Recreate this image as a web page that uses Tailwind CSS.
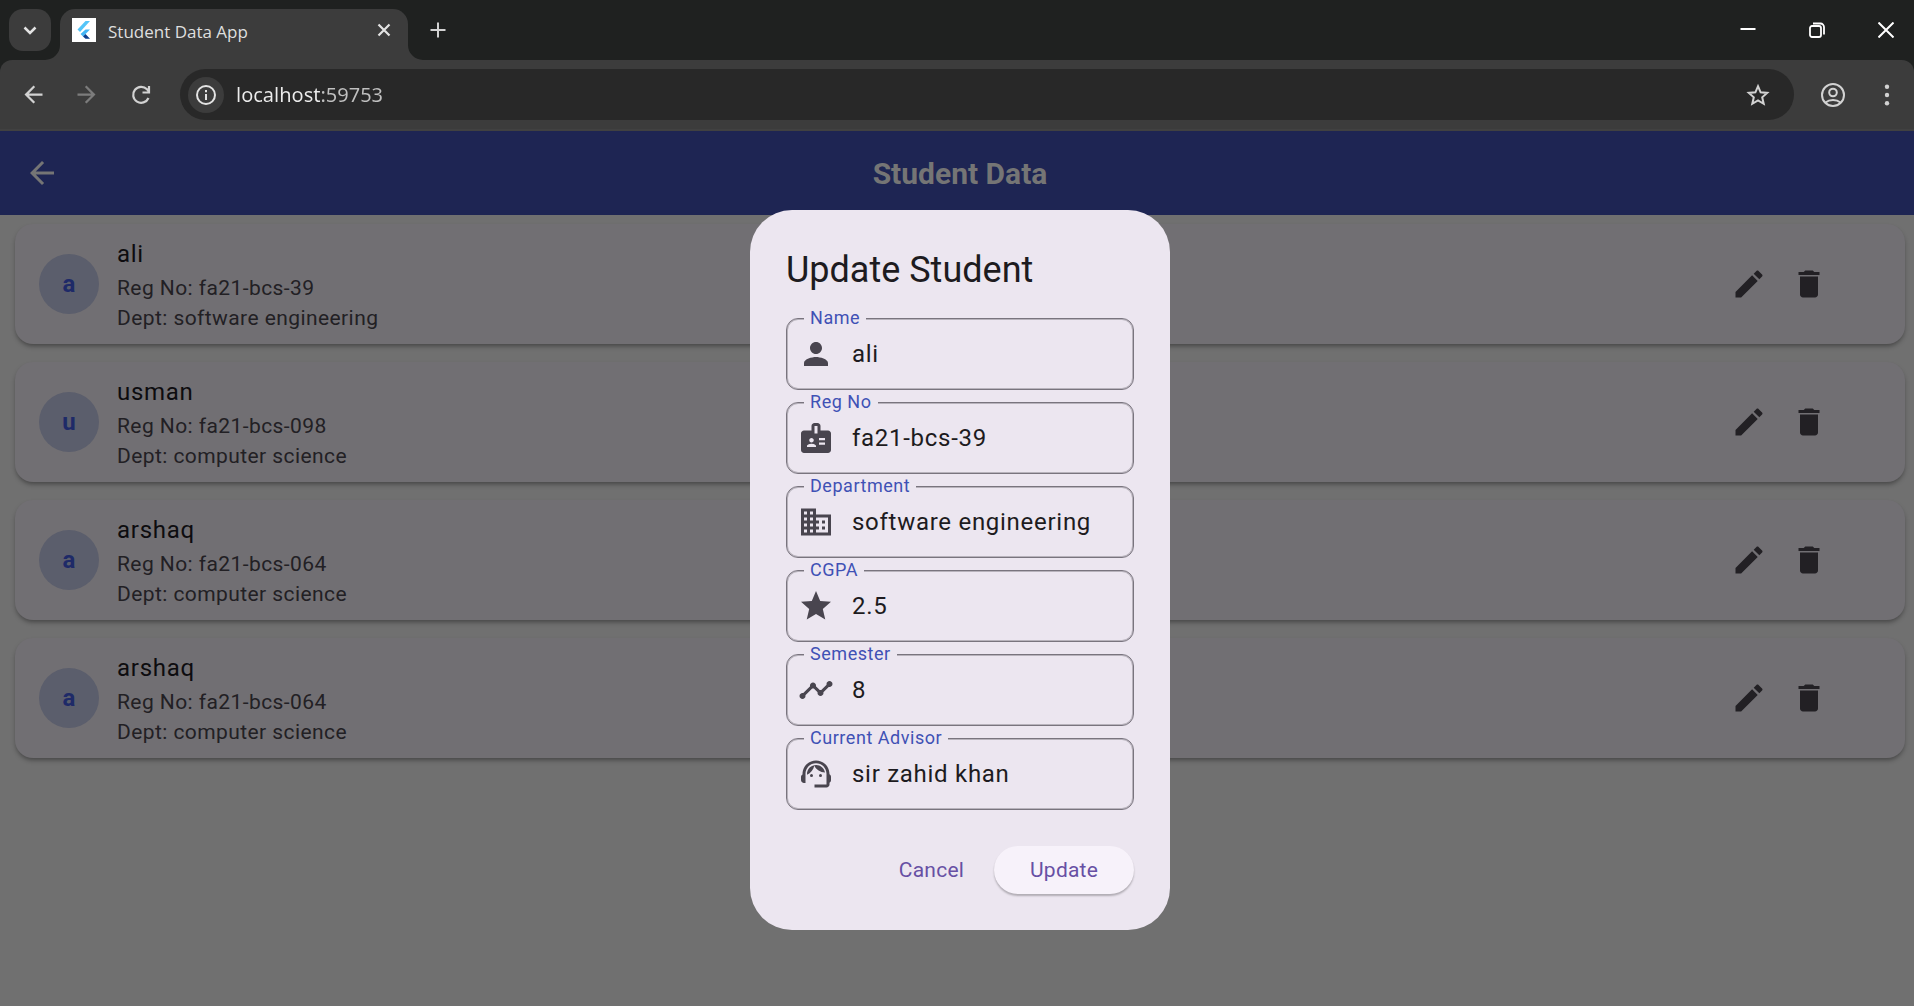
<!DOCTYPE html>
<html lang="en">
<head>
<meta charset="utf-8">
<meta name="viewport" content="width=device-width, initial-scale=1">
<title>Student Data App</title>
<script src="https://cdn.jsdelivr.net/npm/@tailwindcss/browser@4"></script>
</head>
<body class="flex min-h-screen flex-col bg-[#707070] font-[Roboto,sans-serif]">

<!-- Icon definitions -->
<svg class="hidden" aria-hidden="true">
  <symbol id="back" viewBox="0 0 24 24"><path d="M20 11H7.83l5.59-5.59L12 4l-8 8 8 8 1.41-1.41L7.83 13H20v-2z"/></symbol>
  <symbol id="edit" viewBox="0 0 24 24"><path d="M3 17.25V21h3.75L17.81 9.94l-3.75-3.75L3 17.25zM20.71 7.04c.39-.39.39-1.02 0-1.41l-2.34-2.34c-.39-.39-1.02-.39-1.41 0l-1.83 1.83 3.75 3.75 1.83-1.83z"/></symbol>
  <symbol id="delete" viewBox="0 0 24 24"><path d="M6 19c0 1.1.9 2 2 2h8c1.1 0 2-.9 2-2V7H6v12zM19 4h-3.5l-1-1h-5l-1 1H5v2h14V4z"/></symbol>
  <symbol id="person" viewBox="0 0 24 24"><path d="M12 12c2.21 0 4-1.79 4-4s-1.79-4-4-4-4 1.79-4 4 1.79 4 4 4zm0 2c-2.67 0-8 1.34-8 4v2h16v-2c0-2.66-5.33-4-8-4z"/></symbol>
  <symbol id="badge" viewBox="0 0 24 24"><path fill-rule="evenodd" d="M20 7h-5V4c0-1.1-.9-2-2-2h-2c-1.1 0-2 .9-2 2v3H4c-1.1 0-2 .9-2 2v11c0 1.1.9 2 2 2h16c1.1 0 2-.9 2-2V9c0-1.1-.9-2-2-2zM9 12c.83 0 1.5.67 1.5 1.5S9.83 15 9 15s-1.5-.67-1.5-1.5S8.17 12 9 12zm3 6H6v-.75c0-1 2-1.5 3-1.5s3 .5 3 1.5V18zm1-9h-2V4h2v5zm5 7.5h-4V15h4v1.5zm0-3h-4V12h4v1.5z"/></symbol>
  <symbol id="business" viewBox="0 0 24 24"><path d="M12 7V3H2v18h20V7H12zM6 19H4v-2h2v2zm0-4H4v-2h2v2zm0-4H4V9h2v2zm0-4H4V5h2v2zm4 12H8v-2h2v2zm0-4H8v-2h2v2zm0-4H8V9h2v2zm0-4H8V5h2v2zm10 12h-8v-2h2v-2h-2v-2h2v-2h-2V9h8v10zm-2-8h-2v2h2v-2zm0 4h-2v2h2v-2z"/></symbol>
  <symbol id="star" viewBox="0 0 24 24"><path d="M12 17.27L18.18 21l-1.64-7.03L22 9.24l-7.19-.61L12 2 9.19 8.63 2 9.24l5.46 4.73L5.82 21z"/></symbol>
  <symbol id="timeline" viewBox="0 0 24 24"><path d="M23 8c0 1.1-.9 2-2 2-.18 0-.35-.02-.51-.07l-3.56 3.55c.05.16.07.34.07.52 0 1.1-.9 2-2 2s-2-.9-2-2c0-.18.02-.36.07-.52l-2.55-2.55c-.16.05-.34.07-.52.07s-.36-.02-.52-.07l-4.55 4.56c.05.16.07.33.07.51 0 1.1-.9 2-2 2s-2-.9-2-2 .9-2 2-2c.18 0 .35.02.51.07l4.56-4.55C8.02 9.36 8 9.18 8 9c0-1.1.9-2 2-2s2 .9 2 2c0 .18-.02.36-.07.52l2.55 2.55c.16-.05.34-.07.52-.07s.36.02.52.07l3.55-3.56C19.02 8.35 19 8.18 19 8c0-1.1.9-2 2-2s2 .9 2 2z"/></symbol>
  <symbol id="agent" viewBox="0 0 24 24"><path d="M21 12.22C21 6.73 16.74 3 12 3c-4.69 0-9 3.65-9 9.28-.6.34-1 .98-1 1.72v2c0 1.1.9 2 2 2h1v-6.1c0-3.87 3.13-7 7-7s7 3.13 7 7V19h-8v2h8c1.1 0 2-.9 2-2v-1.22c.59-.31 1-.92 1-1.64v-2.3c0-.7-.41-1.31-1-1.62z"/><circle cx="9" cy="13" r="1"/><circle cx="15" cy="13" r="1"/><path d="M18 11.03C17.52 8.18 15.04 6 12.05 6c-3.03 0-6.29 2.51-6.03 6.45 2.47-1.01 4.33-3.21 4.86-5.89 1.31 2.63 4 4.44 7.12 4.47z"/></symbol>
</svg>

<!-- Browser chrome -->
<header class="bg-[#1f2120]">
  <div class="flex h-[60px] items-end pl-[9px]">
    <button aria-label="Search tabs" class="mb-[9px] flex size-[42px] items-center justify-center rounded-[14px] bg-[#3c3c3c]">
      <svg class="size-[18px]" viewBox="0 0 18 18" fill="none" stroke="#e3e3e3" stroke-width="2.5"><path d="M3.500 6.500l5.500 5.500 5.500-5.500"/></svg>
    </button>
    <div class="relative ml-[9px] flex h-[51px] w-[348px] items-center rounded-t-[15px] bg-[#3c3c3c] pr-3 pb-[9px] pl-3">
      <svg class="absolute bottom-0 -left-[15px] size-[15px]" viewBox="0 0 15 15" fill="#3c3c3c"><path d="M15 0v15H0A15 15 0 0 0 15 0z"/></svg>
      <svg class="absolute -right-[15px] bottom-0 size-[15px]" viewBox="0 0 15 15" fill="#3c3c3c"><path d="M0 0v15h15A15 15 0 0 1 0 0z"/></svg>
      <svg class="size-6" viewBox="0 0 24 24"><path fill="#fff" d="M0 0h24v24H0z"/><path fill="#54c5f8" d="M13.500 3H18L8 14 5.500 11.500z"/><path fill="#42b5f5" d="M13.500 11.500H18L13.500 16 11 18.500 8.500 16z"/><path fill="#0b3c8c" d="M11 18.500l2.500-2.500L18 20.800h-4.500z"/></svg>
      <span class="ml-3 flex-1 pt-[3px] font-['Open_Sans',sans-serif] text-[17px] leading-6 text-[#dfdfdf]">Student Data App</span>
      <button aria-label="Close tab" class="flex size-6 items-center justify-center">
        <svg class="size-[14px]" viewBox="0 0 14 14" stroke="#e3e3e3" stroke-width="2.200"><path d="M1.500 1.500l11 11M12.500 1.500l-11 11"/></svg>
      </button>
    </div>
    <button aria-label="New tab" class="mb-[21px] ml-[21px] flex size-[18px] items-center justify-center">
      <svg class="size-4" viewBox="0 0 16 16" stroke="#d2d2d2" stroke-width="2"><path d="M8 0.500v15M0.500 8h15"/></svg>
    </button>
    <div class="ml-auto flex h-full items-center">
      <button aria-label="Minimize" class="flex h-full w-[69px] items-center justify-center pl-3"><svg class="size-4" viewBox="0 0 16 16" stroke="#fff" stroke-width="2"><path d="M0.500 7h15"/></svg></button>
      <button aria-label="Restore" class="flex h-full w-[69px] items-center justify-center pl-3"><svg class="size-4" viewBox="0 0 16 16" fill="none" stroke="#fff" stroke-width="1.800"><rect x="1" y="4" width="11" height="11" rx="2"/><path d="M4 1.500h7.500a3.500 3.500 0 0 1 3.500 3.500v7.500"/></svg></button>
      <button aria-label="Close" class="flex h-full w-[69px] items-center justify-center pl-3"><svg class="size-4" viewBox="0 0 16 16" stroke="#fff" stroke-width="2"><path d="M0.500 0.500l15 15M15.500 0.500l-15 15"/></svg></button>
    </div>
  </div>
  <div class="flex h-[71px] items-center rounded-t-[12px] border-b-2 border-[#414141] bg-[#3c3c3c] pl-5">
    <button aria-label="Back"><svg class="size-[27px] fill-[#d2d2d2]"><use href="#back"/></svg></button>
    <button aria-label="Forward" class="ml-[26px]"><svg class="size-[27px] rotate-180 fill-[#7c7c7c]"><use href="#back"/></svg></button>
    <button aria-label="Reload" class="ml-[28px]">
      <svg class="size-[26px]" viewBox="0 0 26 26" fill="none" stroke="#d2d2d2" stroke-width="2.200"><path d="M20.500 16A8 8 0 1 1 19 7.300L21 9.500M21 4v6.500h-6.500"/></svg>
    </button>
    <div class="ml-[26px] flex h-[51px] flex-1 items-center rounded-full bg-[#282828] pr-[24px] pl-2">
      <button aria-label="View site information" class="flex size-9 items-center justify-center rounded-full bg-[#3c3c3c]">
        <svg class="size-5" viewBox="0 0 20 20" fill="none" stroke="#e3e3e3" stroke-width="2"><circle cx="10" cy="10" r="9"/><path d="M10 9v6M10 5v2.200"/></svg>
      </button>
      <!-- The host is brighter than the port -->
      <input aria-label="Address" value="localhost:59753" class="ml-3 h-7 min-w-0 flex-1 bg-[linear-gradient(to_right,#ececec_84px,#c0c0c0_84px)] bg-clip-text font-['Noto_Sans',sans-serif] text-[20px] leading-7 text-transparent outline-none">
      <button aria-label="Bookmark this tab"><svg class="size-6" viewBox="0 0 24 24" fill="none" stroke="#d2d2d2" stroke-width="2"><path d="M12 3.200l2.600 6.100 6.600.6-5 4.400 1.500 6.500-5.700-3.400-5.700 3.400 1.500-6.500-5-4.400 6.600-.6z"/></svg></button>
    </div>
    <button aria-label="Profile" class="ml-[27px]"><svg class="size-6" viewBox="0 0 24 24" fill="none" stroke="#d2d2d2" stroke-width="2"><circle cx="12" cy="12" r="11"/><circle cx="12" cy="9.500" r="3.800"/><path d="M4.500 19.500c4-3.300 11-3.300 15 0"/></svg></button>
    <button aria-label="Menu" class="mr-[15px] ml-[30px]"><svg class="size-6" viewBox="0 0 24 24" fill="#d2d2d2"><circle cx="12" cy="3.700" r="2.200"/><circle cx="12" cy="12" r="2.200"/><circle cx="12" cy="20.300" r="2.200"/></svg></button>
  </div>
</header>

<!-- App -->
<div class="relative flex-1">
  <div class="flex h-[84px] items-center bg-[#1e2553] px-6">
    <button aria-label="Back" class="w-9"><svg class="size-9 fill-[#757575]"><use href="#back"/></svg></button>
    <h1 class="flex-1 pt-0.5 pr-[30px] text-center text-[30px] leading-9 font-bold text-[#757575]">Student Data</h1>
  </div>

  <ul id="students" class="flex flex-col gap-[18px] pt-[9px] pr-[9px] pl-[15px]"></ul>

  <!-- Update dialog -->
  <div class="absolute inset-0 flex items-center justify-center pt-[3px] pl-[6px]">
    <form role="dialog" aria-labelledby="dialog-title" class="w-[420px] rounded-[42px] bg-[#ece6f0] p-9">
      <h2 id="dialog-title" class="text-4xl leading-[48px] text-[#1d1b20]">Update Student</h2>
      <div id="fields" class="mt-6 flex flex-col gap-3"></div>
      <div class="mt-9 flex items-center justify-end gap-3">
        <button type="button" class="h-12 rounded-full px-[18px] pt-0.5 text-[21px] tracking-[0.01em] text-[#6750a4]">Cancel</button>
        <button type="button" class="h-12 rounded-full bg-[#f7f2fa] px-9 pt-0.5 text-[21px] tracking-[0.01em] text-[#6750a4] shadow-[0_2px_2px_rgba(0,0,0,0.25)]">Update</button>
      </div>
    </form>
  </div>
</div>

<script>
const students = [
  ["ali", "fa21-bcs-39", "software engineering"],
  ["usman", "fa21-bcs-098", "computer science"],
  ["arshaq", "fa21-bcs-064", "computer science"],
  ["arshaq", "fa21-bcs-064", "computer science"],
];
document.getElementById("students").innerHTML = students.map(([name, reg, dept]) => `
  <li class="flex h-[120px] items-center rounded-[18px] bg-[#716f73] pr-[78px] pl-6 shadow-[0_3px_5px_-1px_rgba(0,0,0,0.4)]">
    <span class="flex size-[60px] items-center justify-center rounded-full bg-[#5b5e6c] text-2xl font-bold text-[#1e2a68]">${name[0]}</span>
    <div class="ml-[18px] flex-1">
      <h3 class="text-2xl leading-[38px] tracking-[0.03em] text-[#0d0c0f]">${name}</h3>
      <p class="text-[21px] leading-[30px] tracking-[0.02em] text-[#222024]">Reg No: ${reg}</p>
      <p class="text-[21px] leading-[30px] tracking-[0.02em] text-[#222024]">Dept: ${dept}</p>
    </div>
    <button aria-label="Edit ${name}"><svg class="size-9 fill-[#222024]"><use href="#edit"/></svg></button>
    <button aria-label="Delete ${name}" class="ml-6"><svg class="size-9 fill-[#222024]"><use href="#delete"/></svg></button>
  </li>`).join("");

const fields = [
  ["name", "Name", "person", "ali"],
  ["reg", "Reg No", "badge", "fa21-bcs-39"],
  ["dept", "Department", "business", "software engineering"],
  ["cgpa", "CGPA", "star", "2.5"],
  ["semester", "Semester", "timeline", "8"],
  ["advisor", "Current Advisor", "agent", "sir zahid khan"],
];
document.getElementById("fields").innerHTML = fields.map(([id, label, icon, value]) => `
  <div class="relative flex h-[72px] items-center rounded-[12px] border border-[#79747e] pl-[11px] shadow-[inset_0_0_0_1px_#b8b3bc]">
    <label for="${id}" class="absolute -top-[11px] left-[17px] bg-[#ece6f0] px-[6px] text-lg leading-5 tracking-[0.03em] text-[#3f51b5]">${label}</label>
    <svg class="size-9 shrink-0 fill-[#49454f]"><use href="#${icon}"/></svg>
    <input id="${id}" value="${value}" class="mr-1 ml-[18px] w-full min-w-0 bg-transparent text-2xl tracking-[0.03em] text-[#1d1b20] outline-none">
  </div>`).join("");
</script>
</body>
</html>
